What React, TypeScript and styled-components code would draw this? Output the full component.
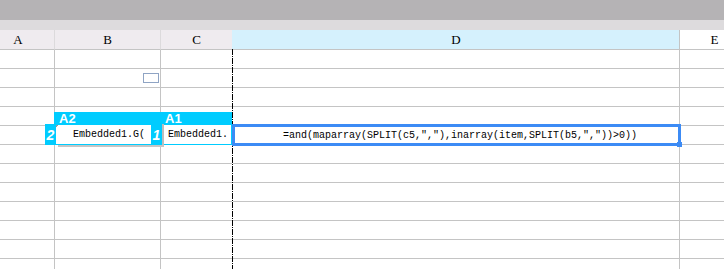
import React from 'react';
import styled, { createGlobalStyle } from 'styled-components';

const GlobalStyle = createGlobalStyle`
  html, body { margin: 0; padding: 0; background: #ffffff; overflow: hidden; }
  body { width: 724px; height: 269px; font-family: "Liberation Sans", Arial, sans-serif; }
`;

const Page = styled.div`
  width: 724px;
  height: 269px;
  overflow: hidden;
  display: flex;
  flex-direction: column;
`;

const TopBar = styled.div`
  flex: none;
  height: 20px;
  background: #b5b3b5;
`;

const SubBar = styled.div`
  flex: none;
  height: 10px;
  background: #dddbdd;
`;

const Sheet = styled.div`
  position: relative;
  flex: 1;
  overflow: hidden;
`;

const Grid = styled.div`
  display: grid;
  grid-template-columns: 73px 106px 72px 447px 70px;
  grid-template-rows: 20px;
  grid-auto-rows: 19px;
  margin-left: -18px;
  width: 768px;
`;

const HeadCell = styled.div<{ $sel?: boolean; $plain?: boolean; $sep: string }>`
  box-sizing: border-box;
  display: flex;
  align-items: center;
  justify-content: center;
  padding-top: 1px;
  background: ${(p) => (p.$sel ? '#d5f1fd' : p.$plain ? '#ffffff' : '#efebef')};
  border-bottom: 1px solid #c4c4c4;
  border-right: 1px solid ${(p) => p.$sep};
  font-family: "Liberation Serif", "Times New Roman", serif;
  font-size: 13px;
  color: #000;
`;

const Cell = styled.div<{ $line?: boolean }>`
  box-sizing: border-box;
  display: flex;
  align-items: center;
  justify-content: flex-end;
  border-bottom: 1px solid #c4c4c4;
  border-right: 1px solid ${(p) => (p.$line ? '#c4c4c4' : 'transparent')};
`;

const Marker = styled.div`
  box-sizing: border-box;
  width: 16px;
  height: 10px;
  margin-right: 1px;
  border: 1px solid #8fa4c4;
  background: #fff;
`;

const PageBreak = styled.div`
  position: absolute;
  left: 232px;
  top: 19px;
  bottom: 0;
  width: 1px;
  background: repeating-linear-gradient(
    to bottom,
    #000 0 6px,
    #fff 6px 7px,
    #000 7px 8px,
    #fff 8px 9px
  );
`;

const RefOverlay = styled.div`
  position: absolute;
  left: 45px;
  top: 82px;
  display: flex;
  flex-direction: column;
`;

const RefHead = styled.div`
  display: flex;
  margin-left: 9px;
  width: 178px;
  height: 12px;
  background: #00ccff;
`;

const RefName = styled.div<{ $w: number }>`
  width: ${(p) => p.$w}px;
  box-sizing: border-box;
  padding-left: 5px;
  color: #fff;
  font-family: "Liberation Sans", Arial, sans-serif;
  font-weight: bold;
  font-size: 13px;
  line-height: 13px;
`;

const RefRow = styled.div`
  display: flex;
  height: 21px;
`;

const Tab = styled.div<{ $w: number }>`
  width: ${(p) => p.$w}px;
  background: #00ccff;
  color: #fff;
  font-family: "Liberation Sans", Arial, sans-serif;
  font-weight: bold;
  font-style: italic;
  font-size: 14px;
  display: flex;
  align-items: center;
  justify-content: center;
  padding-top: 1px;
  box-sizing: border-box;
`;

const ShadowGroup = styled.div`
  display: flex;
  box-shadow: 2px 2px 0 #c6c6c6;
`;

const RefCell = styled.div<{ $w: number; $pad: number }>`
  position: relative;
  width: ${(p) => p.$w}px;
  box-sizing: border-box;
  background: #fff;
  border-top: 1px solid #00ccff;
  border-bottom: 1px solid #00ccff;
  padding-left: ${(p) => p.$pad}px;
  display: flex;
  align-items: center;
  overflow: hidden;
  white-space: nowrap;
  font-family: "Liberation Mono", "Courier New", monospace;
  font-size: 10px;
  color: #000;
`;

const Corner = styled.span`
  position: absolute;
  left: 0;
  top: 0;
  width: 3px;
  height: 3px;
  background: linear-gradient(135deg, #9a9a9a 0 50%, transparent 50%);
`;

const Gap = styled.div`
  width: 2px;
  background: #bdbdbd;
`;

const Edge = styled.div`
  width: 2px;
  background: #00ccff;
`;

const EditBox = styled.div`
  position: absolute;
  left: 232px;
  top: 94px;
  width: 449px;
  height: 22px;
  box-sizing: border-box;
  border: 3px solid #3c8bf5;
  background: #fff;
  padding-left: 48px;
  display: flex;
  align-items: center;
  white-space: nowrap;
  font-family: "Liberation Mono", "Courier New", monospace;
  font-size: 10px;
  color: #000;
`;

const FillHandle = styled.div`
  position: absolute;
  right: -4px;
  bottom: -4px;
  width: 5px;
  height: 5px;
  background: #3c8bf5;
`;

const columns = ['A', 'B', 'C', 'D', 'E'];
const ROWS = 12;

export default function App() {
  return (
    <>
      <GlobalStyle />
      <Page>
        <TopBar />
        <SubBar />
        <Sheet>
          <Grid>
            {columns.map((c) => (
              <HeadCell
                key={c}
                $sel={c === 'D'}
                $plain={c === 'E'}
                $sep={c === 'C' ? '#d5f1fd' : c === 'D' ? '#c4c4c4' : '#dcdadc'}
              >
                {c}
              </HeadCell>
            ))}
            {Array.from({ length: ROWS }).map((_, r) =>
              columns.map((c) => (
                <Cell key={`${r}-${c}`} $line={c !== 'C' && c !== 'E'}>
                  {r === 1 && c === 'B' ? <Marker /> : null}
                </Cell>
              ))
            )}
          </Grid>
          <PageBreak />
          <RefOverlay>
            <RefHead>
              <RefName $w={106}>A2</RefName>
              <RefName $w={72}>A1</RefName>
            </RefHead>
            <RefRow>
              <Tab $w={11}>2</Tab>
              <ShadowGroup>
                <RefCell $w={95} $pad={17}>
                  <Corner />
                  Embedded1.G(
                </RefCell>
                <Tab $w={11}>1</Tab>
              </ShadowGroup>
              <Gap />
              <RefCell $w={67} $pad={4}>Embedded1.</RefCell>
              <Edge />
            </RefRow>
          </RefOverlay>
          <EditBox>
            =and(maparray(SPLIT(c5,","),inarray(item,SPLIT(b5,","))&gt;0))
            <FillHandle />
          </EditBox>
        </Sheet>
      </Page>
    </>
  );
}
